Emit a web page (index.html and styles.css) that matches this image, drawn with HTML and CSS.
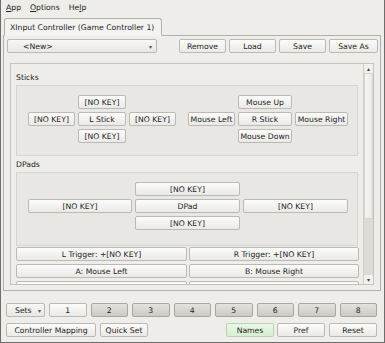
FILE: index.html
```html
<!DOCTYPE html>
<html lang="en">
<head>
  <meta charset="UTF-8">
  <title>XInput Controller</title>
  <link rel="stylesheet" href="styles.css">
</head>
<body>
  <div class="window">
    <!-- menu -->
    <div class="menubar">
      <span class="menu"><u>A</u>pp</span>
      <span class="menu"><u>O</u>ptions</span>
      <span class="menu">He<u>l</u>p</span>
    </div>

    <div class="tabbar">
      <div class="tab">XInput Controller (Game Controller 1)</div>
    </div>

    <div class="panel">
      <div class="toolbar">
        <div class="combo combo-new"><span>&lt;New&gt;</span><span class="arrow">▾</span></div>
        <div class="toolbar-buttons">
          <button class="btn">Remove</button>
          <button class="btn">Load</button>
          <button class="btn">Save</button>
          <button class="btn">Save As</button>
        </div>
      </div>

      <div class="scroll">
        <div class="viewport">
          <div class="group-title">Sticks</div>
          <div class="frame sticks">
            <div class="cluster cluster-left">
              <button class="btn up">[NO KEY]</button>
              <button class="btn left">[NO KEY]</button>
              <button class="btn mid">L Stick</button>
              <button class="btn right">[NO KEY]</button>
              <button class="btn down">[NO KEY]</button>
            </div>
            <div class="cluster cluster-right">
              <button class="btn up">Mouse Up</button>
              <button class="btn left">Mouse Left</button>
              <button class="btn mid">R Stick</button>
              <button class="btn right">Mouse Right</button>
              <button class="btn down">Mouse Down</button>
            </div>
          </div>

          <div class="group-title dpads-title">DPads</div>
          <div class="frame dpads">
            <button class="btn up">[NO KEY]</button>
            <button class="btn left">[NO KEY]</button>
            <button class="btn mid">DPad</button>
            <button class="btn right">[NO KEY]</button>
            <button class="btn down">[NO KEY]</button>
          </div>

          <div class="pairs">
            <button class="btn">L Trigger: +[NO KEY]</button>
            <button class="btn">R Trigger: +[NO KEY]</button>
            <button class="btn">A: Mouse Left</button>
            <button class="btn">B: Mouse Right</button>
            <button class="btn">X: [NO KEY]</button>
            <button class="btn">Y: [NO KEY]</button>
          </div>
        </div>
        <div class="scrollbar">
          <div class="sb-arrow">▴</div>
          <div class="sb-handle"></div>
          <div class="sb-track"></div>
          <div class="sb-arrow">▾</div>
        </div>
      </div>
    </div>

    <div class="sets-row">
      <div class="combo combo-sets"><span>Sets</span><span class="arrow">▾</span></div>
      <button class="btn set">1</button>
      <button class="btn set off">2</button>
      <button class="btn set off">3</button>
      <button class="btn set off">4</button>
      <button class="btn set off">5</button>
      <button class="btn set off">6</button>
      <button class="btn set off">7</button>
      <button class="btn set off">8</button>
    </div>

    <div class="bottom-row">
      <button class="btn wide">Controller Mapping</button>
      <button class="btn">Quick Set</button>
      <div class="spacer"></div>
      <button class="btn names">Names</button>
      <button class="btn">Pref</button>
      <button class="btn">Reset</button>
    </div>
  </div>
</body>
</html>
```

FILE: styles.css
```css
/* base */
* {
  box-sizing: border-box;
  margin: 0;
  padding: 0;
}

body {
  background-color: #efedea;
  color: #222;
  font-family: 'DejaVu Sans', sans-serif;
  font-size: 7.7px;
}

.window {
  width: 385px;
  height: 343px;
  display: flex;
  flex-direction: column;
  border: 1px solid #6f6d6a;
  border-top: none;
  overflow: hidden;
}

/* menu bar */
.menubar {
  height: 15px;
  display: flex;
  align-items: center;
  padding-left: 5px;
  gap: 9px;
}

.menu u {
  text-decoration-thickness: 1px;
  text-underline-offset: 1px;
}

/* tabs */
.tabbar {
  display: flex;
  padding: 3px 0 0 3px;
  margin-bottom: -1px;
}

.tab {
  height: 18px;
  padding: 0 5px;
  display: flex;
  align-items: center;
  width: 158px;
  white-space: nowrap;
  background-color: #f4f3f1;
  border: 1px solid #b3afa9;
  border-bottom-color: #f4f3f1;
  border-radius: 3px 3px 0 0;
  position: relative;
  z-index: 1;
}

.panel {
  margin: 0 3px 0 2px;
  height: 256px;
  border: 1px solid #b3afa9;
  padding: 3px 2px 3px 3px;
  display: flex;
  flex-direction: column;
}

/* buttons */
.btn {
  height: 14px;
  font-family: inherit;
  font-size: inherit;
  color: inherit;
  border: 1px solid #bcb8b2;
  border-radius: 2px;
  background: linear-gradient(#fbfbfa, #ebe9e6);
  white-space: nowrap;
  overflow: hidden;
}

.combo {
  height: 14px;
  display: flex;
  align-items: center;
  justify-content: space-between;
  border: 1px solid #bcb8b2;
  border-radius: 2px;
  background: linear-gradient(#f8f7f5, #e9e7e4);
}

.combo .arrow {
  font-size: 6px;
  color: #555;
}

.toolbar {
  display: flex;
  align-items: center;
}

.combo-new {
  width: 150px;
  padding: 0 4px 0 15px;
}

.toolbar-buttons {
  margin-left: auto;
  display: flex;
  gap: 3px;
}

.toolbar-buttons .btn {
  width: 47px;
}

.toolbar-buttons .btn:last-child {
  width: 49px;
}

/* scroll area */
.scroll {
  margin: 10px 3px 0 3px;
  height: 222px;
  width: 364px;
  display: flex;
  border: 1px solid #c6c2bc;
}

.viewport {
  flex: 1;
  overflow: hidden;
  padding: 7px 4px 0 5px;
}

.group-title {
  height: 14px;
  line-height: 14px;
}

.dpads-title {
  margin-top: 2px;
}

.frame {
  border: 1px solid #d8d5d0;
  background-color: #e9e7e3;
  width: 342px;
}

.sticks {
  height: 71px;
  padding: 9px 0 0 11px;
  display: flex;
  gap: 12px;
}

.cluster {
  display: grid;
  grid-template-rows: repeat(3, 14px);
  row-gap: 3px;
  column-gap: 3px;
  grid-template-areas:
    ". up ."
    "left mid right"
    ". down .";
}

.cluster-left {
  grid-template-columns: 47px 48px 47px;
}

.cluster-right {
  grid-template-columns: 47px 54px 53px;
}

.up { grid-area: up; }
.left { grid-area: left; }
.mid { grid-area: mid; }
.right { grid-area: right; }
.down { grid-area: down; }

.dpads {
  height: 74px;
  padding: 9px 0 0 11px;
  display: grid;
  grid-template-columns: 104px 105px 105px;
  grid-template-rows: repeat(3, 14px);
  row-gap: 3px;
  column-gap: 3px;
  grid-template-areas:
    ". up ."
    "left mid right"
    ". down .";
}

.pairs {
  margin-top: 1px;
  display: grid;
  grid-template-columns: 171px 170px;
  column-gap: 2px;
  row-gap: 3px;
}

/* scrollbar */
.scrollbar {
  width: 10px;
  display: flex;
  flex-direction: column;
  border-left: 1px solid #d2cec8;
  background-color: #f2f1ef;
}

.sb-arrow {
  height: 9px;
  font-size: 6px;
  line-height: 9px;
  text-align: center;
  color: #444;
}

.sb-handle {
  height: 146px;
  background: linear-gradient(90deg, #f6f5f3, #eceae7);
  border: 1px solid #d6d3ce;
}

.sb-track {
  flex: 1;
  background-color: #dedbd7;
}

/* bottom rows */
.sets-row {
  margin-top: 12px;
  padding: 0 7px 0 5px;
  display: flex;
  gap: 4px;
}

.combo-sets {
  width: 39px;
  padding: 0 3px 0 8px;
}

.set {
  flex: 1;
}

.set.off {
  background: linear-gradient(#e4e2de, #cdcac5);
  border-color: #aaa6a0;
}

.bottom-row {
  margin-top: 6px;
  padding: 0 7px 0 5px;
  display: flex;
  gap: 4px;
}

.bottom-row .btn {
  width: 48px;
}

.bottom-row .wide {
  width: 90px;
}

.spacer {
  flex: 1;
}

.bottom-row .names {
  background: linear-gradient(#eaf8e6, #d6eed1);
  border-color: #b9d3b3;
  margin-right: -1px;
}
```
